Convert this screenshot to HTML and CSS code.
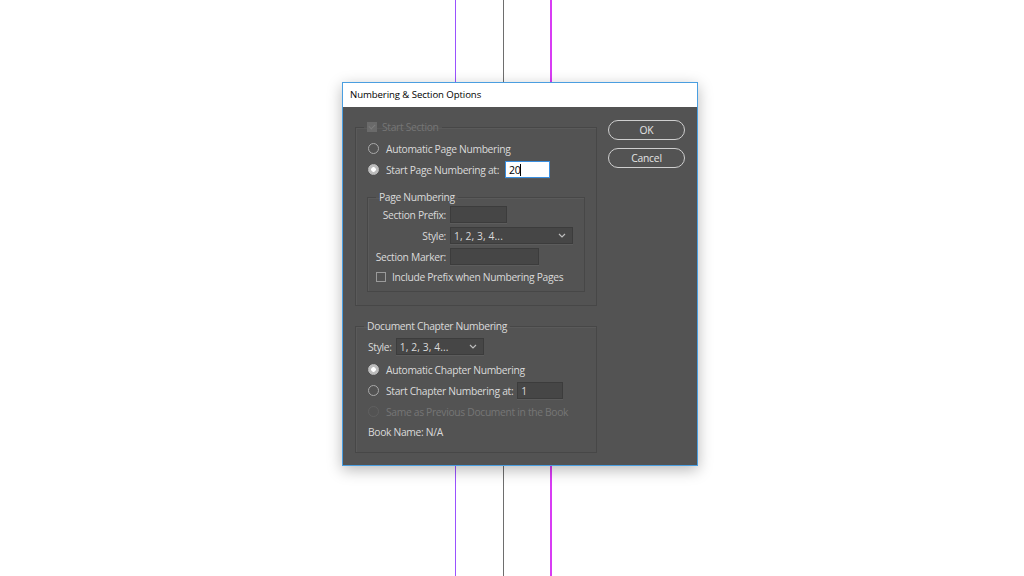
FILE: index.html
```html
<!DOCTYPE html>
<html lang="en">
<head>
<meta charset="utf-8">
<title>Numbering &amp; Section Options</title>
<link rel="stylesheet" href="styles.css">
</head>
<body>
<div class="canvas">
  <div class="guide guide-purple"></div>
  <div class="guide guide-gray"></div>
  <div class="guide guide-magenta"></div>

  <div class="dialog">
    <div class="titlebar">Numbering &amp; Section Options</div>
    <div class="body">
      <div class="main">
        <fieldset class="group group-section">
          <legend class="legend legend-check">
            <span class="checkbox checkbox-disabled checked"></span>
            <span class="disabled-text">Start Section</span>
          </legend>
          <div class="row"><span class="radio"></span><span>Automatic Page Numbering</span></div>
          <div class="row"><span class="radio on"></span><span>Start Page Numbering at:</span><span class="field field-focus">20<span class="caret"></span></span></div>

          <fieldset class="group group-inner">
            <legend class="legend legend-inner">Page Numbering</legend>
            <div class="form-grid">
              <span class="lbl lbl-prefix">Section Prefix:</span><span class="field field-prefix"></span>
              <span class="lbl">Style:</span><span class="select select-wide"><span>1, 2, 3, 4...</span><svg class="chev" viewBox="0 0 8 5" width="8" height="5"><path d="M1 1 L4 4 L7 1" fill="none" stroke="#bdbdbd" stroke-width="1.2"/></svg></span>
              <span class="lbl lbl-marker">Section Marker:</span><span class="field field-marker"></span>
            </div>
            <div class="row row-check"><span class="checkbox"></span><span>Include Prefix when Numbering Pages</span></div>
          </fieldset>
        </fieldset>

        <fieldset class="group group-chapter">
          <legend class="legend legend-chapter">Document Chapter Numbering</legend>
          <div class="row row-style"><span>Style:</span><span class="select select-small"><span>1, 2, 3, 4...</span><svg class="chev" viewBox="0 0 8 5" width="8" height="5"><path d="M1 1 L4 4 L7 1" fill="none" stroke="#bdbdbd" stroke-width="1.2"/></svg></span></div>
          <div class="row row-first"><span class="radio on"></span><span>Automatic Chapter Numbering</span></div>
          <div class="row"><span class="radio"></span><span>Start Chapter Numbering at:</span><span class="field field-chapter">1</span></div>
          <div class="row"><span class="radio radio-disabled"></span><span class="disabled-text">Same as Previous Document in the Book</span></div>
          <div class="row row-book">Book Name: N/A</div>
        </fieldset>
      </div>
      <div class="buttons">
        <button class="btn">OK</button>
        <button class="btn">Cancel</button>
      </div>
    </div>
  </div>
</div>
</body>
</html>
```

FILE: styles.css
```css
* { box-sizing: border-box; }
html, body { margin: 0; padding: 0; background: #ffffff; }
.canvas {
  position: relative;
  width: 1024px;
  height: 576px;
  overflow: hidden;
  font-family: "Open Sans", "Noto Sans", sans-serif;
}
.guide { position: absolute; top: 0; bottom: 0; width: 1px; }
.guide-purple { left: 455px; background: #9a52ff; }
.guide-gray { left: 503px; background: #6e6e6e; }
.guide-magenta { left: 550px; width: 2px; background: #d83cf4; }

.dialog {
  position: absolute;
  left: 342px;
  top: 82px;
  width: 356px;
  height: 384px;
  border: 1px solid #4a9ee0;
  background: #535353;
  box-shadow: 0 4px 14px rgba(0,0,0,0.28);
  display: flex;
  flex-direction: column;
}
.titlebar {
  height: 24px;
  background: #ffffff;
  color: #000;
  font-size: 9.6px;
  letter-spacing: -0.08px;
  line-height: 24px;
  padding-left: 7px;
}
.body {
  flex: 1;
  display: flex;
  padding: 13px 12px 12px 12px;
  gap: 11px;
  color: #dadada;
  font-size: 10.3px;
  letter-spacing: -0.32px;
  white-space: nowrap;
}
.main { width: 242px; display: flex; flex-direction: column; }
.buttons { width: 77px; display: flex; flex-direction: column; gap: 8px; }
.btn {
  height: 20px;
  border: 1px solid #cfcfcf;
  border-radius: 10px;
  background: #535353;
  color: #e4e4e4;
  font-family: inherit;
  font-size: 10.3px;
  letter-spacing: -0.2px;
  padding: 0;
}

.group {
  margin: 0;
  border: 1px solid #474747;
  box-shadow: inset 1px 1px 0 #5a5a5a;
  min-width: 0;
}
.legend {
  line-height: 14px;
  padding: 0 3px;
  color: #dadada;
  display: flex;
  align-items: center;
  gap: 5px;
}
.group-section { padding: 4px 12px 13px 12px; }
.legend-check { margin-left: -4px; }
.group-inner { margin: 11px -1px 0 -1px; padding: 1px 8px 5px 8px; }
.legend-inner { line-height: 12px; margin-left: 0; }
.group-chapter { margin-top: 13px; padding: 3px 12px 10px 12px; }
.legend-chapter { margin-left: -4px; }

.row { height: 21px; display: flex; align-items: center; gap: 7px; }
.row-check { height: 19px; gap: 6px; }
.row-style { gap: 4px; }
.row-first { margin-top: 2px; }
.row-book { height: 20px; }

.form-grid {
  display: grid;
  grid-template-columns: 70px auto;
  grid-auto-rows: 21px;
  column-gap: 4px;
  align-items: center;
  justify-items: start;
}
.lbl { justify-self: end; }

.radio {
  width: 11px; height: 11px;
  border-radius: 50%;
  border: 1px solid #a9a9a9;
  flex: none;
}
.radio.on {
  background: radial-gradient(circle, #ffffff 0 2px, #bdbdbd 2.6px);
  border-color: #bdbdbd;
}
.radio-disabled { border-color: #606060; }
.disabled-text { color: #767676; }

.checkbox {
  width: 10px; height: 10px;
  border: 1px solid #9a9a9a;
  flex: none;
  position: relative;
}
.checkbox-disabled {
  background: #6a6a6a;
  border-color: #6a6a6a;
}
.checkbox-disabled::after {
  content: "";
  position: absolute;
  left: 2px; top: 0px;
  width: 3px; height: 5px;
  border: solid #7c7c7c;
  border-width: 0 1.5px 1.5px 0;
  transform: rotate(45deg);
}

.field {
  height: 17px;
  background: #464646;
  border: 1px solid #3c3c3c;
  box-shadow: 0 1px 0 #5c5c5c;
  color: #dadada;
  display: flex;
  align-items: center;
  padding-left: 3px;
  flex: none;
}
.field-focus {
  width: 45px;
  margin-left: -1px;
  background: #ffffff;
  border: 1px solid #3a8fe0;
  color: #000;
  font-size: 10.5px;
}
.caret { width: 1px; height: 12px; background: #000; }
.field-prefix { width: 57px; }
.field-marker { width: 89px; }
.field-chapter { width: 46px; margin-left: -3px; }

.select {
  height: 17px;
  background: #464646;
  border: 1px solid #3c3c3c;
  box-shadow: 0 1px 0 #5c5c5c;
  display: flex;
  align-items: center;
  justify-content: space-between;
  padding: 0 6px 0 3px;
  color: #dadada;
  letter-spacing: 0.1px;
}
.select-wide { width: 123px; }
.select-small { width: 88px; }
.chev { flex: none; }
```
